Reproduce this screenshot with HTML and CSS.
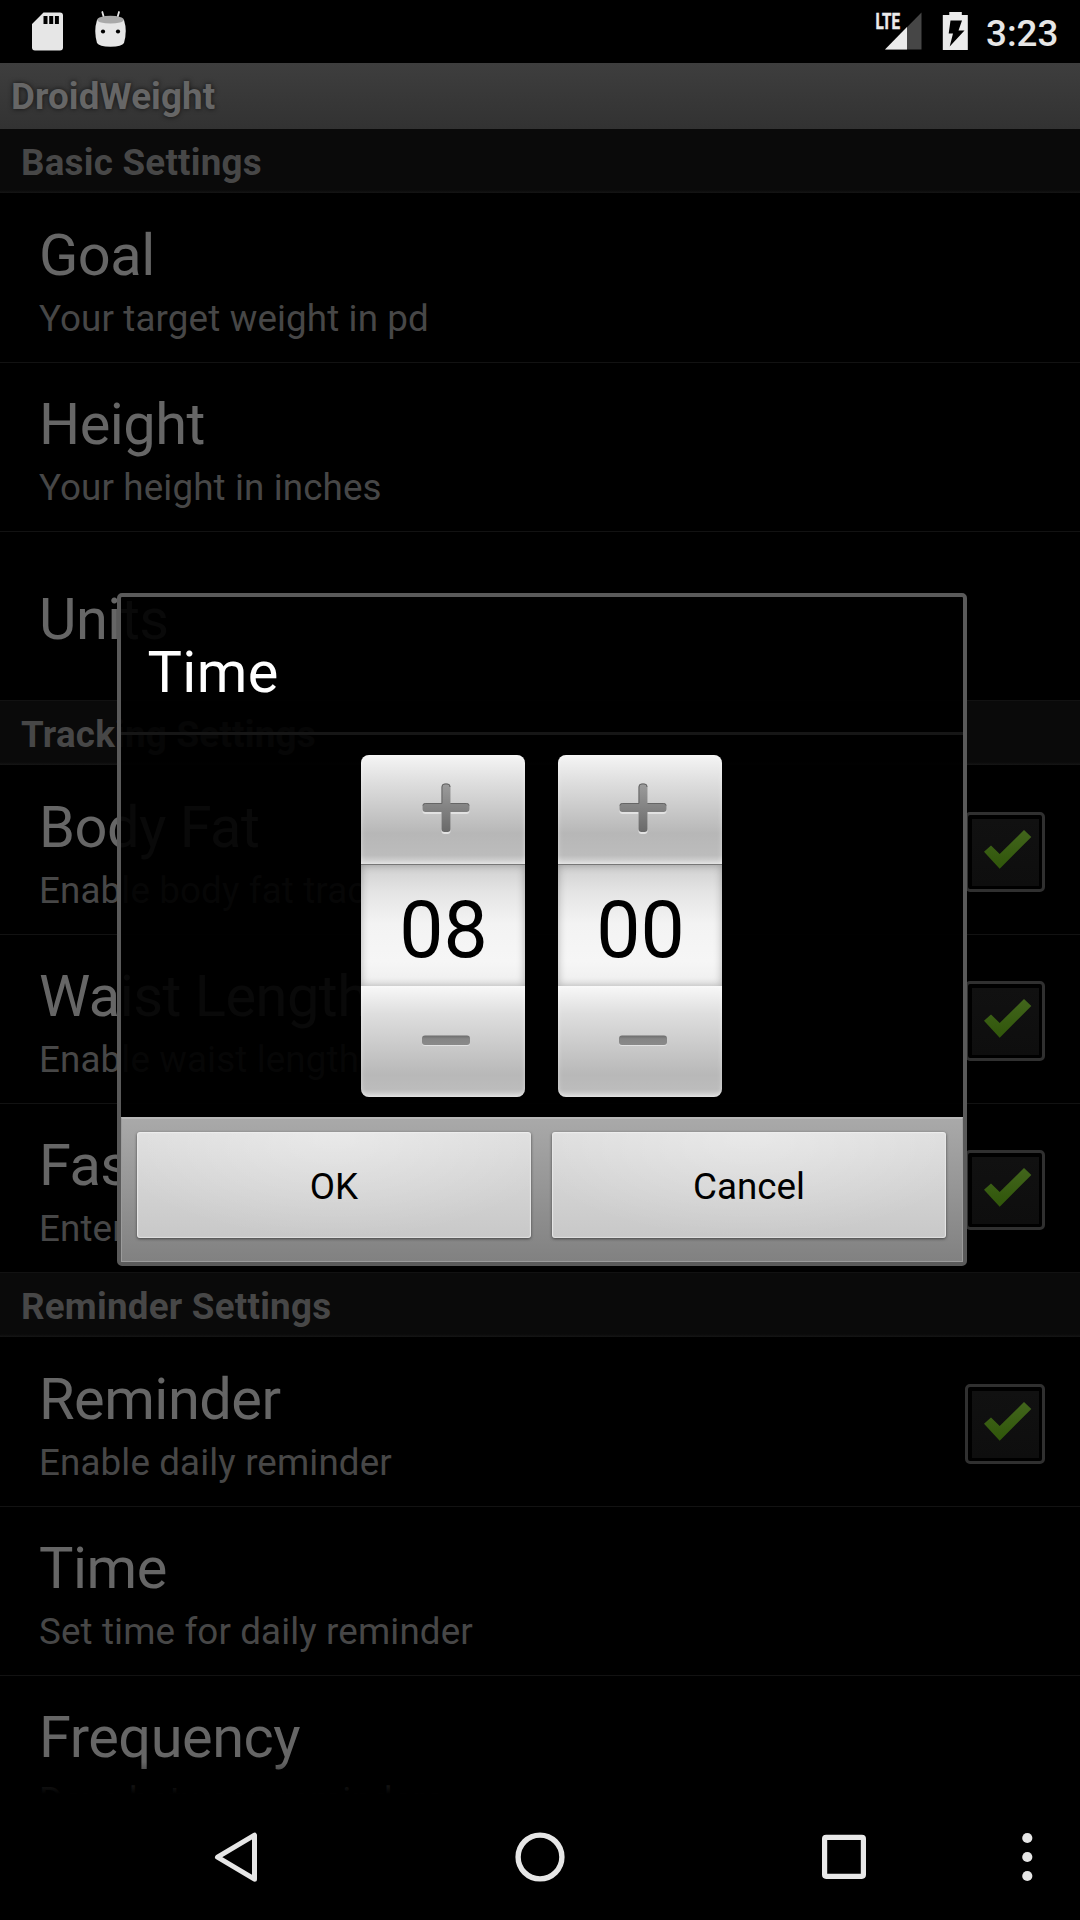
FILE: index.html
```html
<!DOCTYPE html>
<html lang="en">
<head>
<meta charset="utf-8">
<title>DroidWeight</title>
<link rel="stylesheet" href="styles.css">
</head>
<body>
<svg class="defs" width="0" height="0" aria-hidden="true">
  <defs>
    <linearGradient id="tick-fill" x1="0" y1="0" x2="0" y2="1"><stop offset="0" stop-color="#42651c"/><stop offset="1" stop-color="#30560a"/></linearGradient>
    <linearGradient id="glyph-fill" x1="0" y1="0" x2="0" y2="1"><stop offset="0" stop-color="#9c9c9c"/><stop offset="1" stop-color="#696969"/></linearGradient>
    <linearGradient id="bar-fill" x1="0" y1="0" x2="0" y2="1"><stop offset="0" stop-color="#6c6c6c"/><stop offset=".35" stop-color="#858585"/><stop offset="1" stop-color="#8a8a8a"/></linearGradient>
    <symbol id="tick" viewBox="0 0 80 80"><path d="M19 39.7 26 33.5 34.7 42 59 18 66.3 25 34.7 56.7Z" fill="url(#tick-fill)"/></symbol>
    <symbol id="plus" viewBox="0 0 50 52">
      <path d="M20.5 3.5a3 3 0 0 1 3-3h3a3 3 0 0 1 3 3V20h16a3 3 0 0 1 3 3v4a3 3 0 0 1-3 3h-16v17a3 3 0 0 1-3 3h-3a3 3 0 0 1-3-3V30h-16a3 3 0 0 1-3-3v-4a3 3 0 0 1 3-3h16Z" fill="#e2e2e2" transform="translate(0 1)"/>
      <path d="M20.5 3.5a3 3 0 0 1 3-3h3a3 3 0 0 1 3 3V20h16a3 3 0 0 1 3 3v3a3 3 0 0 1-3 3h-16v17a3 3 0 0 1-3 3h-3a3 3 0 0 1-3-3V29h-16a3 3 0 0 1-3-3v-3a3 3 0 0 1 3-3h16Z" fill="url(#glyph-fill)"/>
      <path d="M2 22.5q0-2 2.500-2h16.500V4q0-3 3-3h2q3 0 3 3M29.500 20.500h16q2.500 0 2.500 2" fill="none" stroke="#666"/>
    </symbol>
    <symbol id="minus" viewBox="0 0 50 52">
      <rect x="1" y="21.500" width="48" height="9.500" rx="3" fill="#e2e2e2"/>
      <rect x="1" y="20.500" width="48" height="9.500" rx="3" fill="url(#bar-fill)"/>
    </symbol>
  </defs>
</svg>
<div class="screen">
  <header class="status">
    <div class="status-icons">
      <svg width="40" height="63" viewBox="28 0 40 63"><path fill="#e6e6e6" fill-rule="evenodd" d="M43.500 12.500H60a3 3 0 0 1 3 3V47.500a3 3 0 0 1-3 3H35a3 3 0 0 1-3-3V24ZM43.500 16v8h4v-8ZM49.200 16v8h4v-8ZM54.900 16v8h4v-8Z"/></svg>
      <svg width="40" height="63" viewBox="90 0 40 63">
        <path d="M102.300 12l2 7M119 12l-2 7" stroke="#e6e6e6" stroke-width="1.800" stroke-linecap="round"/>
        <path d="M97 20Q110.500 13 124 20Q127.500 31 124 43Q122 46.700 110.500 46.700Q99 46.700 97 43Q93.500 31 97 20Z" fill="#e6e6e6"/>
        <ellipse cx="110.500" cy="19.700" rx="13.300" ry="3.900" fill="#a9a9a9"/>
        <circle cx="103" cy="31.500" r="2.100"/><circle cx="118" cy="31.500" r="2.100"/>
      </svg>
    </div>
    <div class="status-info">
      <svg width="50" height="63" viewBox="874 0 50 63">
        <path d="M921.500 12.500V49.500H885Z" fill="#464646"/>
        <path d="M907 27V49.500H885Z" fill="#ebebeb"/>
        <text class="lte" x="875.500" y="29" textLength="24.500" lengthAdjust="spacingAndGlyphs">LTE</text>
      </svg>
      <svg width="27" height="63" viewBox="942 0 27 63"><path fill="#ebebeb" fill-rule="evenodd" d="M949.300 12h12.500v3h6v35h-25V15h6.500ZM950.500 20.500 948.700 33.500H953L949.700 46.500 964.500 30.500H958.500L962 20.500Z"/></svg>
      <span class="clock">3:23</span>
    </div>
  </header>

  <div class="titlebar">DroidWeight</div>

  <main class="settings">
    <h2 class="section">Basic Settings</h2>
    <div class="row"><div class="texts"><div class="name">Goal</div><div class="note">Your target weight in pd</div></div></div>
    <div class="row"><div class="texts"><div class="name">Height</div><div class="note">Your height in inches</div></div></div>
    <div class="row single"><div class="texts"><div class="name">Units</div></div></div>
    <h2 class="section">Tracking Settings</h2>
    <div class="row"><div class="texts"><div class="name">Body Fat</div><div class="note">Enable body fat trac</div></div><div class="check"><svg><use href="#tick"/></svg></div></div>
    <div class="row"><div class="texts"><div class="name">Waist Length</div><div class="note">Enable waist length</div></div><div class="check"><svg><use href="#tick"/></svg></div></div>
    <div class="row"><div class="texts"><div class="name">Fas</div><div class="note">Enter</div></div><div class="check"><svg><use href="#tick"/></svg></div></div>
    <h2 class="section">Reminder Settings</h2>
    <div class="row"><div class="texts"><div class="name">Reminder</div><div class="note">Enable daily reminder</div></div><div class="check"><svg><use href="#tick"/></svg></div></div>
    <div class="row"><div class="texts"><div class="name">Time</div><div class="note">Set time for daily reminder</div></div></div>
    <div class="row"><div class="texts"><div class="name">Frequency</div><div class="note">Days between reminders</div></div></div>
  </main>

  <nav class="navbar">
    <svg width="60" height="60" viewBox="206 1827 60 60"><path d="M254.500 1835.200v44L217.500 1857.200Z" fill="none" stroke="#e6e6e6" stroke-width="5" stroke-linejoin="round"/></svg>
    <svg width="60" height="60" viewBox="510 1827 60 60"><circle cx="540" cy="1857" r="21.900" fill="none" stroke="#e6e6e6" stroke-width="5.400"/></svg>
    <svg width="60" height="60" viewBox="814 1827 60 60"><rect x="824.600" y="1837.300" width="38.800" height="39" rx="1.500" fill="none" stroke="#e9e9e9" stroke-width="5.200"/></svg>
    <svg width="20" height="60" viewBox="1017 1827 20 60" fill="#e6e6e6"><circle cx="1027.300" cy="1838" r="5.100"/><circle cx="1027.300" cy="1857" r="5.100"/><circle cx="1027.300" cy="1876" r="5.100"/></svg>
  </nav>

  <section class="dialog">
    <h1 class="dialog-title">Time</h1>
    <div class="pickers">
      <div class="picker"><div class="step up"><svg><use href="#plus"/></svg></div><div class="value">08</div><div class="step down"><svg><use href="#minus"/></svg></div></div>
      <div class="picker"><div class="step up"><svg><use href="#plus"/></svg></div><div class="value">00</div><div class="step down"><svg><use href="#minus"/></svg></div></div>
    </div>
    <div class="actions"><div class="button">OK</div><div class="button">Cancel</div></div>
  </section>
</div>
</body>
</html>
```
FILE: styles.css
```css
* { box-sizing: border-box; }

body {
  margin: 0;
  background: #000;
  font-family: Roboto, "Liberation Sans", sans-serif;
  font-size: 36.75px;
}

svg { display: block; }
.defs { position: absolute; }

.screen {
  position: relative;
  width: 1080px;
  height: 1920px;
  overflow: hidden;
  display: flex;
  flex-direction: column;
  background: #000;
}

/* status bar */
.status {
  height: 63px;
  flex: none;
  display: flex;
  justify-content: space-between;
  padding: 0 22px 0 28px;
}
.status-icons { display: flex; gap: 22px; }
.status-info { display: flex; }
.status-info svg + svg { margin-left: 18px; }
.lte { font-size: 22px; font-weight: 700; fill: #ebebeb; stroke: #ebebeb; stroke-width: .5px; }
.clock {
  width: 72px;
  margin-left: 17px;
  color: #e6e6e6;
  font-weight: 500;
  line-height: 67px;
  white-space: nowrap;
}

.titlebar {
  height: 66px;
  flex: none;
  padding-left: 11px;
  background: linear-gradient(#3e3e3e, #323232);
  color: #666;
  font-weight: 700;
  letter-spacing: .1px;
  line-height: 68px;
  text-shadow: 0 0 5px rgba(0, 0, 0, .7);
}

/* preference list */
.settings {
  position: relative;
  flex: 1;
  min-height: 0;
  overflow: hidden;
}
.settings::after {
  content: "";
  position: absolute;
  inset: auto 0 0;
  height: 32px;
  background: linear-gradient(transparent, #000);
}
.section {
  height: 65px;
  margin: 0;
  padding-left: 21px;
  border-bottom: 1px solid #000;
  background: linear-gradient(#0a0a0a 0 61px, #151515 64px);
  color: #474747;
  font-size: 36.75px;
  font-weight: 700;
  letter-spacing: .24px;
  line-height: 68px;
}
.row {
  height: 169px;
  display: flex;
  align-items: center;
  justify-content: space-between;
  padding: 4px 35px 0 39px;
  border-bottom: 1px solid #121212;
}
.single { padding-top: 6px; }
.name {
  color: #666;
  font-size: 57.75px;
  letter-spacing: -.5px;
  line-height: 68px;
}
.note {
  margin-top: 8px;
  color: #474747;
  letter-spacing: .13px;
  line-height: 43px;
}
.check {
  width: 80px;
  height: 80px;
  border: 3px solid #303030;
  border-radius: 5px;
  background: linear-gradient(#111, #0e0e0e) center / 67px 67px no-repeat;
}
.check svg { width: 80px; height: 80px; margin: -3px; }

/* navigation bar */
.navbar {
  height: 126px;
  flex: none;
  display: grid;
  grid-template-columns: 304px 304px 304px 62px;
  place-items: center;
  padding-left: 84px;
}

/* time dialog, floats over the list */
.dialog {
  position: absolute;
  left: 117px;
  top: 593px;
  width: 850px;
  height: 673px;
  display: flex;
  flex-direction: column;
  border: 4px solid #5a5a5a;
  border-radius: 5px;
  background: rgba(0, 0, 0, .915);
}
.dialog-title {
  height: 138px;
  flex: none;
  margin: 0;
  padding: 15px 0 0 26.500px;
  border-bottom: 3px solid #161616;
  color: #fff;
  font-size: 57.75px;
  font-weight: 400;
  letter-spacing: .4px;
  line-height: 120px;
}
.pickers {
  flex: 1;
  display: flex;
  justify-content: center;
  gap: 33px;
  padding: 20px 2px 0 0;
}
.picker { width: 164px; display: flex; flex-direction: column; }
.step {
  display: flex;
  justify-content: center;
  padding-left: 6px;
  box-shadow: inset 0 0 5px rgba(255, 255, 255, .45);
}
.step svg { width: 50px; height: 52px; }
.up {
  height: 109px;
  padding-top: 28px;
  border-radius: 8px 8px 0 0;
  background: linear-gradient(#f5f5f5, #dedede 25%, #b7b7b7 72%, #bcbcbc 92%, #dcdcdc);
}
.down {
  height: 111px;
  padding-top: 29px;
  border-radius: 0 0 8px 8px;
  background: linear-gradient(#f8f8f8, #dedede 25%, #b8b8b8 80%, #bcbcbc 93%, #dcdcdc);
}
.value {
  height: 122px;
  padding-left: 2px;
  border-top: 1px solid #777;
  background: linear-gradient(#d0d0d0, #e4e4e4 22%, #f3f3f3 48%, #f6f6f6 80%, #eee);
  box-shadow: inset 0 0 9px rgba(0, 0, 0, .28);
  color: #000;
  font-size: 78.75px;
  line-height: 130px;
  text-align: center;
}
.actions {
  height: 145px;
  flex: none;
  display: flex;
  gap: 21px;
  padding: 14px 16px 0 15px;
  border: 1px solid #9b9b9b;
  border-top: 2px solid #b8b8b8;
  background: linear-gradient(#a9a9a9, #818181);
}
.button {
  flex: 1;
  height: 106px;
  margin-top: -1px;
  border-radius: 3px;
  background: radial-gradient(ellipse 60% 100% at 50% 0, rgba(255, 255, 255, .35), transparent), linear-gradient(#dedede, #c8c8c8);
  box-shadow: inset 0 1px 1px #eee, inset 1px 0 1px #e6e6e6, inset -1px 0 1px #e6e6e6, inset 0 -1px 1px #ddd, 0 1px 3px #444;
  color: #000;
  line-height: 109px;
  text-align: center;
}
```
